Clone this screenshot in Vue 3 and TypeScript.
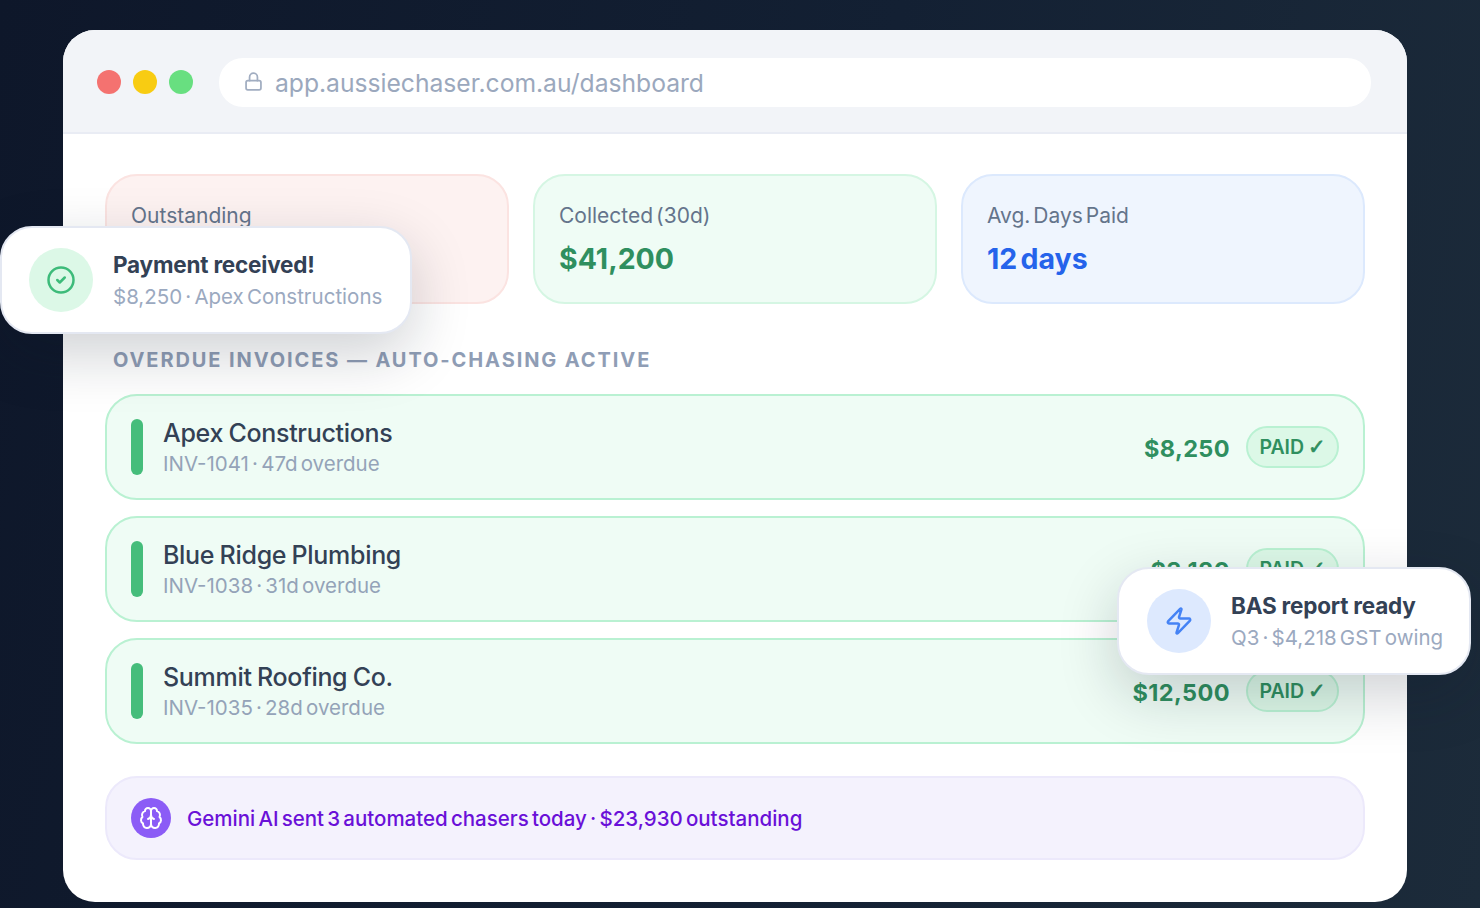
<script setup lang="ts">
interface Invoice {
  name: string;
  meta: string;
  amount: string;
}

const stats = [
  { label: "Outstanding", value: "$23,930", tone: "red" },
  { label: "Collected (30d)", value: "$41,200", tone: "green" },
  { label: "Avg. Days Paid", value: "12 days", tone: "blue" },
];

const invoices: Invoice[] = [
  { name: "Apex Constructions", meta: "INV-1041 · 47d overdue", amount: "$8,250" },
  { name: "Blue Ridge Plumbing", meta: "INV-1038 · 31d overdue", amount: "$3,180" },
  { name: "Summit Roofing Co.", meta: "INV-1035 · 28d overdue", amount: "$12,500" },
];
</script>

<template>
  <div class="page">
    <div class="window">
      <header class="chrome">
        <span class="dot dot-red"></span>
        <span class="dot dot-yellow"></span>
        <span class="dot dot-green"></span>
        <div class="url">
          <svg class="lock" viewBox="0 0 24 24" fill="none" stroke="currentColor" stroke-width="2" stroke-linecap="round" stroke-linejoin="round">
            <rect x="3.5" y="11" width="17" height="10.5" rx="2" />
            <path d="M7.5 11V7a4.5 4.5 0 0 1 9 0v4" />
          </svg>
          <span class="url-text">app.aussiechaser.com.au/dashboard</span>
        </div>
      </header>

      <main class="content">
        <section class="stats">
          <div v-for="stat in stats" :key="stat.label" class="stat" :class="`stat-${stat.tone}`">
            <div class="stat-label">{{ stat.label }}</div>
            <div class="stat-value">{{ stat.value }}</div>
          </div>
        </section>

        <h2 class="section-title">OVERDUE INVOICES — AUTO-CHASING ACTIVE</h2>

        <section class="rows">
          <div v-for="inv in invoices" :key="inv.name" class="row">
            <span class="bar"></span>
            <div class="row-text">
              <div class="row-name">{{ inv.name }}</div>
              <div class="row-meta">{{ inv.meta }}</div>
            </div>
            <div class="row-amount">{{ inv.amount }}</div>
            <span class="pill">PAID <span class="tick">✓</span></span>
          </div>
        </section>

        <div class="ai-note">
          <span class="ai-icon">
            <svg viewBox="0 0 24 24" fill="none" stroke="currentColor" stroke-width="2" stroke-linecap="round" stroke-linejoin="round">
              <path d="M12 5a3 3 0 1 0-5.997.125 4 4 0 0 0-2.526 5.77 4 4 0 0 0 .556 6.588A4 4 0 1 0 12 18Z" />
              <path d="M12 5a3 3 0 1 1 5.997.125 4 4 0 0 1 2.526 5.77 4 4 0 0 1-.556 6.588A4 4 0 1 1 12 18Z" />
              <path d="M15 13a4.5 4.5 0 0 1-3-4 4.5 4.5 0 0 1-3 4" />
            </svg>
          </span>
          <span>Gemini AI sent 3 automated chasers today · $23,930 outstanding</span>
        </div>
      </main>
    </div>

    <div class="toast toast-left">
      <span class="toast-icon icon-green">
        <svg viewBox="0 0 24 24" fill="none" stroke="currentColor" stroke-width="2" stroke-linecap="round" stroke-linejoin="round">
          <circle cx="12" cy="12" r="10" />
          <path d="m9 12 2 2 4-4" />
        </svg>
      </span>
      <div>
        <div class="toast-title">Payment received!</div>
        <div class="toast-sub">$8,250 · Apex Constructions</div>
      </div>
    </div>

    <div class="toast toast-right">
      <span class="toast-icon icon-blue">
        <svg viewBox="0 0 24 24" fill="none" stroke="currentColor" stroke-width="2" stroke-linecap="round" stroke-linejoin="round">
          <path d="M4 14a1 1 0 0 1-.78-1.63l9.9-10.2a.5.5 0 0 1 .86.46l-1.92 6.02A1 1 0 0 0 13 10h7a1 1 0 0 1 .78 1.63l-9.9 10.2a.5.5 0 0 1-.86-.46l1.92-6.02A1 1 0 0 0 11 14z" />
        </svg>
      </span>
      <div>
        <div class="toast-title">BAS report ready</div>
        <div class="toast-sub">Q3 · $4,218 GST owing</div>
      </div>
    </div>
  </div>
</template>

<style scoped>
.page {
  position: relative;
  box-sizing: border-box;
  width: 1480px;
  height: 908px;
  padding: 30px 73px 6px 63px;
  overflow: hidden;
  background: linear-gradient(100deg, #0e172a 0%, #132033 55%, #1c2b3a 100%);
  font-family: Inter, "Noto Sans", sans-serif;
}

.window {
  height: 872px;
  border-radius: 32px;
  background: #fff;
  overflow: hidden;
}

.chrome {
  display: flex;
  align-items: center;
  box-sizing: border-box;
  height: 104px;
  padding: 2px 36px 0 34px;
  gap: 12px;
  background: #f2f4f8;
  border-bottom: 2px solid #e9ecf4;
}

.dot {
  width: 24px;
  height: 24px;
  border-radius: 50%;
}

.dot-red { background: #f47270; }
.dot-yellow { background: #f8cc12; }
.dot-green { background: #68df80; }

.url {
  display: flex;
  flex: 1;
  align-items: center;
  gap: 12px;
  height: 49px;
  margin-left: 14px;
  padding: 0 26px;
  border-radius: 24px;
  background: #fff;
  color: #9ba8bd;
  font-size: 24.65px;
}

.url-text {
  padding-top: 2px;
  margin-left: -1px;
}

.lock {
  width: 21px;
  height: 21px;
  margin: -2px 0 0 -2px;
  color: #a1adc1;
}

.content {
  padding: 40px 42px 0;
}

.stats {
  display: grid;
  grid-template-columns: repeat(3, 1fr);
  gap: 24px;
}

.stat {
  box-sizing: border-box;
  height: 130px;
  padding: 28px 24px;
  border: 2px solid;
  border-radius: 32px;
}

.stat-red { background: #fdf2f1; border-color: #fbe3e1; }
.stat-green { background: #effcf5; border-color: #d5f6e3; }
.stat-blue { background: #eff5fe; border-color: #dce9fd; }

.stat-label {
  color: #64748b;
  font-size: 21px;
  line-height: 24px;
  word-spacing: -3px;
}

.stat-value {
  margin-top: 12px;
  font-size: 28.5px;
  line-height: 38px;
  font-weight: 700;
  word-spacing: -3.5px;
}

.stat-red .stat-value { color: #dc2626; }
.stat-green .stat-value { color: #2f8f5f; }
.stat-blue .stat-value { color: #2563eb; }

.section-title {
  margin: 44px 8px 22px;
  color: #8f9db5;
  font-size: 20px;
  line-height: 24px;
  font-weight: 700;
  letter-spacing: 1.9px;
}

.rows {
  display: flex;
  flex-direction: column;
  gap: 16px;
}

.row {
  display: flex;
  align-items: center;
  box-sizing: border-box;
  height: 106px;
  padding: 0 24px;
  border: 2px solid #b9f1d2;
  border-radius: 32px;
  background: #effcf5;
}

.bar {
  width: 12px;
  height: 56px;
  border-radius: 6px;
  background: #45bd7b;
}

.row-text {
  flex: 1;
  margin-left: 20px;
}

.row-name {
  color: #334155;
  font-size: 25px;
  line-height: 32px;
  font-weight: 500;
  letter-spacing: -0.3px;
  word-spacing: -1px;
}

.row-meta {
  margin-top: 2px;
  color: #94a3b8;
  font-size: 20.5px;
  line-height: 26px;
  word-spacing: -2.6px;
}

.row-amount {
  color: #2f8f5f;
  font-size: 23.5px;
  font-weight: 700;
  letter-spacing: 0.4px;
  padding-top: 2px;
}

.pill {
  box-sizing: border-box;
  width: 93px;
  height: 42px;
  margin-left: 16px;
  border: 2px solid #b9f1d2;
  border-radius: 21px;
  background: #dcf8e7;
  color: #2f8f5f;
  font-size: 19.5px;
  line-height: 38px;
  font-weight: 600;
  text-align: center;
  white-space: nowrap;
  word-spacing: -1px;
}

.tick {
  font-family: "DejaVu Sans", sans-serif;
  font-size: 21px;
  font-weight: 700;
  -webkit-text-stroke: 0.7px currentColor;
}

.ai-note {
  display: flex;
  align-items: center;
  gap: 16px;
  box-sizing: border-box;
  height: 84px;
  margin-top: 32px;
  padding: 0 24px;
  border: 2px solid #ece9fb;
  border-radius: 32px;
  background: #f4f2fd;
  color: #6a10d8;
  font-size: 20.5px;
  font-weight: 500;
  word-spacing: -2.3px;
}

.ai-icon {
  display: flex;
  align-items: center;
  justify-content: center;
  width: 40px;
  height: 40px;
  border-radius: 50%;
  background: #8b5cf6;
  color: #fff;
}

.ai-icon svg {
  width: 24px;
  height: 24px;
}

.toast {
  position: absolute;
  display: flex;
  align-items: center;
  gap: 20px;
  box-sizing: border-box;
  height: 108px;
  padding: 0 27px;
  border: 2px solid #e4e8f2;
  border-radius: 32px;
  background: #fff;
  box-shadow: 0 20px 60px rgba(15, 23, 42, 0.2);
  white-space: nowrap;
}

.toast-left {
  top: 226px;
  left: 0;
  width: 412px;
}

.toast-right {
  top: 567px;
  left: 1117px;
  width: 354px;
  padding-left: 28px;
}

.toast-icon {
  display: flex;
  flex: none;
  align-items: center;
  justify-content: center;
  width: 64px;
  height: 64px;
  border-radius: 50%;
}

.toast-icon svg {
  width: 30px;
  height: 30px;
}

.icon-green { background: #dcf8e7; color: #3dbb7a; }
.icon-blue { background: #dde9fe; color: #4583f5; }

.toast-title {
  color: #334155;
  font-size: 22.5px;
  line-height: 30px;
  font-weight: 700;
  letter-spacing: -0.2px;
}

.toast-sub {
  margin-top: 4px;
  color: #9ba9c0;
  font-size: 20.5px;
  line-height: 26px;
  word-spacing: -2.6px;
}
</style>
